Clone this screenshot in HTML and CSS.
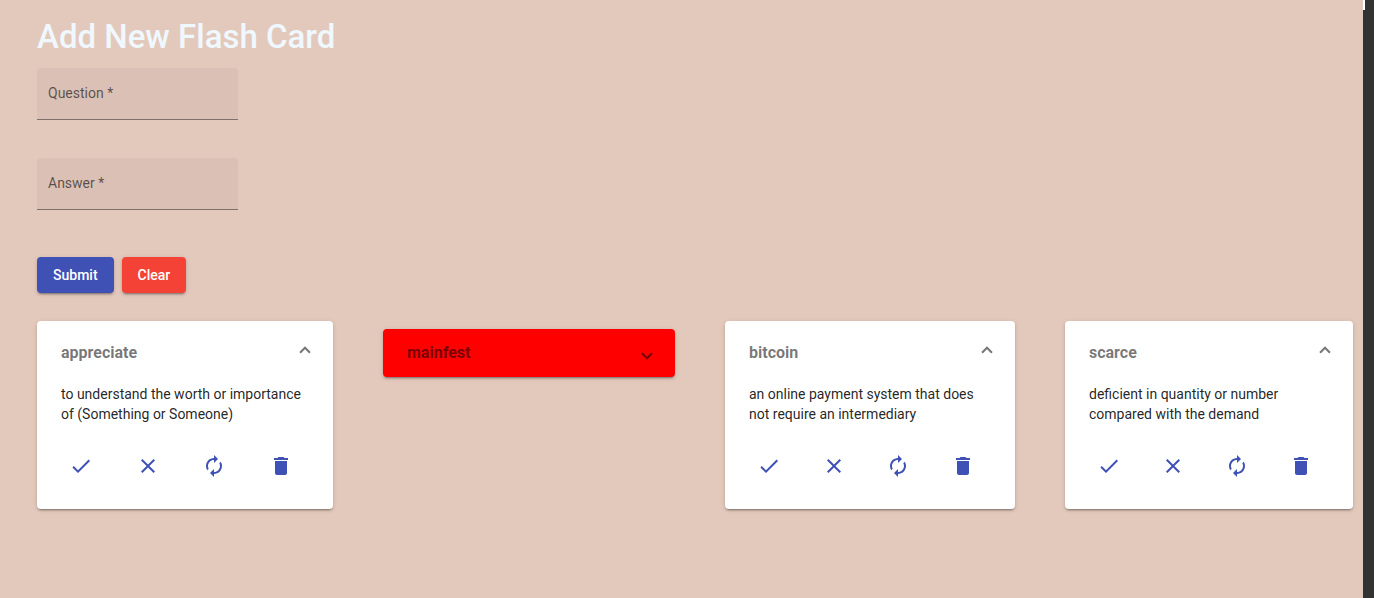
FILE: index.html
```html
<!DOCTYPE html>
<html lang="en">
<head>
  <meta charset="utf-8">
  <meta name="viewport" content="width=device-width, initial-scale=1">
  <title>Flash Cards</title>
  <link rel="stylesheet" href="styles.css">
</head>
<body>
  <svg class="sprite" aria-hidden="true">
    <symbol id="done" viewBox="0 0 24 24"><path d="M9 16.2L4.8 12l-1.4 1.4L9 19 21 7l-1.4-1.4L9 16.2z"/></symbol>
    <symbol id="clear" viewBox="0 0 24 24"><path d="M19 6.41L17.59 5 12 10.59 6.41 5 5 6.41 10.59 12 5 17.59 6.41 19 12 13.41 17.59 19 19 17.59 13.41 12z"/></symbol>
    <symbol id="loop" viewBox="0 0 24 24"><path d="M12 6v3l4-4-4-4v3c-4.42 0-8 3.58-8 8 0 1.57.46 3.03 1.24 4.26L6.7 14.8c-.45-.83-.7-1.79-.7-2.8 0-3.31 2.69-6 6-6zm6.76 1.74L17.3 9.2c.44.84.7 1.79.7 2.8 0 3.31-2.69 6-6 6v-3l-4 4 4 4v-3c4.42 0 8-3.58 8-8 0-1.57-.46-3.03-1.24-4.26z"/></symbol>
    <symbol id="delete" viewBox="0 0 24 24"><path d="M6 19c0 1.100.9 2 2 2h8c1.100 0 2-.9 2-2V7H6v12zM19 4h-3.500l-1-1h-5l-1 1H5v2h14V4z"/></symbol>
  </svg>
  <div class="page">
    <main class="content">
      <h1 class="heading">Add New Flash Card</h1>
      <form class="card-form">
        <div class="field">
          <label class="field-label" for="question">Question *</label>
          <input class="field-input" id="question" type="text" required>
        </div>
        <div class="field">
          <label class="field-label" for="answer">Answer *</label>
          <input class="field-input" id="answer" type="text" required>
        </div>
        <div class="form-actions">
          <button class="button button-primary" type="submit">Submit</button>
          <button class="button button-warn" type="reset">Clear</button>
        </div>
      </form>
      <section class="cards" aria-label="Flash cards">
        <article class="card">
          <button class="card-header" type="button" aria-expanded="true"><span class="card-title">appreciate</span><span class="chevron"></span></button>
          <div class="card-body">
            <p class="card-text">to understand the worth or importance of (Something or Someone)</p>
            <div class="card-actions">
              <button class="icon-button" type="button" aria-label="Correct"><svg class="icon"><use href="#done"/></svg></button>
              <button class="icon-button" type="button" aria-label="Wrong"><svg class="icon"><use href="#clear"/></svg></button>
              <button class="icon-button" type="button" aria-label="Reset"><svg class="icon"><use href="#loop"/></svg></button>
              <button class="icon-button" type="button" aria-label="Delete"><svg class="icon"><use href="#delete"/></svg></button>
            </div>
          </div>
        </article>
        <article class="card card-collapsed">
          <button class="card-header" type="button" aria-expanded="false"><span class="card-title">mainfest</span><span class="chevron"></span></button>
        </article>
        <article class="card">
          <button class="card-header" type="button" aria-expanded="true"><span class="card-title">bitcoin</span><span class="chevron"></span></button>
          <div class="card-body">
            <p class="card-text">an online payment system that does not require an intermediary</p>
            <div class="card-actions">
              <button class="icon-button" type="button" aria-label="Correct"><svg class="icon"><use href="#done"/></svg></button>
              <button class="icon-button" type="button" aria-label="Wrong"><svg class="icon"><use href="#clear"/></svg></button>
              <button class="icon-button" type="button" aria-label="Reset"><svg class="icon"><use href="#loop"/></svg></button>
              <button class="icon-button" type="button" aria-label="Delete"><svg class="icon"><use href="#delete"/></svg></button>
            </div>
          </div>
        </article>
        <article class="card">
          <button class="card-header" type="button" aria-expanded="true"><span class="card-title">scarce</span><span class="chevron"></span></button>
          <div class="card-body">
            <p class="card-text">deficient in quantity or number compared with the demand</p>
            <div class="card-actions">
              <button class="icon-button" type="button" aria-label="Correct"><svg class="icon"><use href="#done"/></svg></button>
              <button class="icon-button" type="button" aria-label="Wrong"><svg class="icon"><use href="#clear"/></svg></button>
              <button class="icon-button" type="button" aria-label="Reset"><svg class="icon"><use href="#loop"/></svg></button>
              <button class="icon-button" type="button" aria-label="Delete"><svg class="icon"><use href="#delete"/></svg></button>
            </div>
          </div>
        </article>
      </section>
    </main>
    <div class="rail"><div class="rail-mark"></div></div>
  </div>
</body>
</html>
```
FILE: styles.css
```css
* {
  box-sizing: border-box;
}

body {
  margin: 0;
  background: #e3c9bc;
  color: rgba(0, 0, 0, 0.87);
  font: 14px/20px Roboto, sans-serif;
}

button,
input {
  font: inherit;
}

.sprite {
  display: none;
}

.page {
  display: flex;
  min-height: 100vh;
}

.content {
  flex: 1;
  min-width: 0;
  padding: 17px 10px 16px 37px;
}

.rail {
  width: 11px;
  background: #333;
}

.rail-mark {
  width: 2px;
  height: 10px;
  background: #fff;
}

.heading {
  margin: 0 0 11px;
  color: aliceblue;
  font-size: 33px;
  font-weight: 500;
  line-height: 40px;
}

.card-form {
  display: flex;
  flex-direction: column;
  align-items: flex-start;
}

.field {
  position: relative;
  width: 201px;
  margin-bottom: 38px;
}

.field-label {
  position: absolute;
  top: 15px;
  left: 11px;
  color: rgba(0, 0, 0, 0.6);
  pointer-events: none;
}

.field-input {
  display: block;
  width: 100%;
  height: 52px;
  padding: 16px 11px 0;
  border: 0;
  border-bottom: 1px solid rgba(0, 0, 0, 0.42);
  border-radius: 4px 4px 0 0;
  outline: 0;
  background: #dbc0b5;
}

.form-actions {
  display: flex;
  gap: 8px;
  margin-top: 9px;
}

.button {
  padding: 0 16px;
  border: 0;
  border-radius: 4px;
  color: #fff;
  font-weight: 500;
  line-height: 36px;
  box-shadow: 0 3px 1px -2px rgba(0, 0, 0, 0.2), 0 2px 2px 0 rgba(0, 0, 0, 0.14), 0 1px 5px 0 rgba(0, 0, 0, 0.12);
}

.button-primary {
  background: #3f51b5;
}

.button-warn {
  background: #f44336;
}

.cards {
  display: grid;
  grid-template-columns: 296fr 292fr 290fr 288fr;
  align-items: start;
  gap: 50px;
  margin-top: 28px;
}

.card {
  border-radius: 4px;
  background: #fff;
  box-shadow: 0 3px 1px -2px rgba(0, 0, 0, 0.2), 0 2px 2px 0 rgba(0, 0, 0, 0.14), 0 1px 5px 0 rgba(0, 0, 0, 0.12);
}

.card-header {
  display: flex;
  align-items: center;
  justify-content: space-between;
  width: 100%;
  height: 63px;
  padding: 0 24px;
  border: 0;
  background: none;
  color: rgba(0, 0, 0, 0.54);
  text-align: left;
}

.card-title {
  font-size: 16px;
  font-weight: 700;
}

.chevron {
  width: 8px;
  height: 8px;
  margin-top: 2px;
  border: solid currentColor;
  border-width: 0 2px 2px 0;
  transform: rotate(45deg);
}

.card-header[aria-expanded="true"] .chevron {
  margin: 0 0 2px;
  transform: rotate(225deg);
}

.card-body {
  padding: 0 24px 16px;
}

.card-text {
  margin: 0;
}

.card-actions {
  display: flex;
  justify-content: space-between;
  padding: 22px 8px 7px 0;
}

.icon-button {
  display: grid;
  place-items: center;
  width: 40px;
  height: 40px;
  padding: 0;
  border: 0;
  background: none;
  color: #3f51b5;
}

.icon {
  width: 24px;
  height: 24px;
  fill: currentColor;
}

.card-collapsed {
  margin-top: 8px;
  background: #f00;
}

.card-collapsed .card-header {
  height: 48px;
}
```
